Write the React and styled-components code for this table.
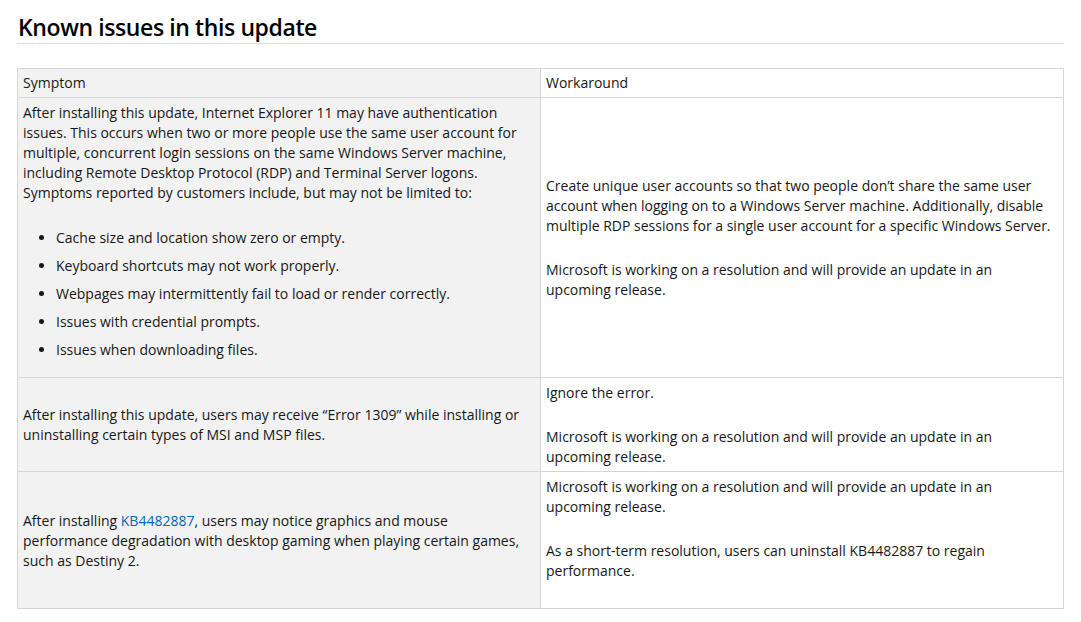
import styled, { createGlobalStyle } from "styled-components";

const GlobalStyle = createGlobalStyle`
  body {
    margin: 0;
    background: #fff;
    font-family: "Open Sans", "Noto Sans", sans-serif;
    color: #171717;
  }
`;

const Page = styled.div`
  padding: 12px 17px 0 17px;
`;

const Heading = styled.h2`
  margin: 0 0 24px;
  padding: 0 0 1px 1px;
  font-size: 23px;
  font-weight: 600;
  letter-spacing: -0.4px;
  line-height: 30px;
  color: #000;
  border-bottom: 1px solid #dcdcdc;
`;

const Table = styled.table`
  width: 100%;
  border-collapse: collapse;
  table-layout: fixed;
  font-size: 14px;
  line-height: 20px;
`;

const Cell = styled.td`
  border: 1px solid #d6d6d6;
  background: ${(p) => (p.$shade ? "#f2f2f2" : "#fff")};
  padding: 5px 6px ${(p) => (p.$trailing ? "27px" : "4px")} 5px;
  vertical-align: middle;
  text-align: left;
  font-weight: 400;

  th& {
    padding-top: 4px;
    padding-bottom: 4px;
  }
`;

const Para = styled.p`
  margin: 0;

  & + & {
    margin-top: 24px;
  }
`;

const List = styled.ul`
  margin: 25px 0 13px;
  padding-left: 33px;

  li {
    margin-bottom: 8px;
  }
`;

const Link = styled.a`
  color: #0067b8;
  text-decoration: none;
`;

function App() {
  const rows = [
    {
      symptom: (
        <>
          <Para>
            After installing this update, Internet Explorer 11 may have
            authentication issues. This occurs when two or more people use the
            same user account for multiple, concurrent login sessions on the
            same Windows Server machine, including Remote Desktop Protocol
            (RDP) and Terminal Server logons. Symptoms reported by customers
            include, but may not be limited to:
          </Para>
          <List>
            <li>Cache size and location show zero or empty.</li>
            <li>Keyboard shortcuts may not work properly.</li>
            <li>Webpages may intermittently fail to load or render correctly.</li>
            <li>Issues with credential prompts.</li>
            <li>Issues when downloading files.</li>
          </List>
        </>
      ),
      workaround: [
        "Create unique user accounts so that two people don’t share the same user account when logging on to a Windows Server machine. Additionally, disable multiple RDP sessions for a single user account for a specific Windows Server.",
        "Microsoft is working on a resolution and will provide an update in an upcoming release.",
      ],
    },
    {
      symptom: (
        <Para>
          After installing this update, users may receive “Error 1309” while
          installing or uninstalling certain types of MSI and MSP files.
        </Para>
      ),
      workaround: [
        "Ignore the error.",
        "Microsoft is working on a resolution and will provide an update in an upcoming release.",
      ],
    },
    {
      symptom: (
        <Para>
          After installing <Link href="#">KB4482887</Link>, users may notice
          graphics and mouse performance degradation with desktop gaming when
          playing certain games, such as Destiny 2.
        </Para>
      ),
      workaround: [
        "Microsoft is working on a resolution and will provide an update in an upcoming release.",
        "As a short-term resolution, users can uninstall KB4482887 to regain performance.",
      ],
      trailing: true,
    },
  ];

  return (
    <Page>
      <GlobalStyle />
      <Heading>Known issues in this update</Heading>
      <Table>
        <thead>
          <tr>
            <Cell as="th" $shade>
              Symptom
            </Cell>
            <Cell as="th">Workaround</Cell>
          </tr>
        </thead>
        <tbody>
          {rows.map((row, i) => (
            <tr key={i}>
              <Cell $shade>{row.symptom}</Cell>
              <Cell $trailing={row.trailing}>
                {row.workaround.map((text, j) => (
                  <Para key={j}>{text}</Para>
                ))}
              </Cell>
            </tr>
          ))}
        </tbody>
      </Table>
    </Page>
  );
}

export default App;
